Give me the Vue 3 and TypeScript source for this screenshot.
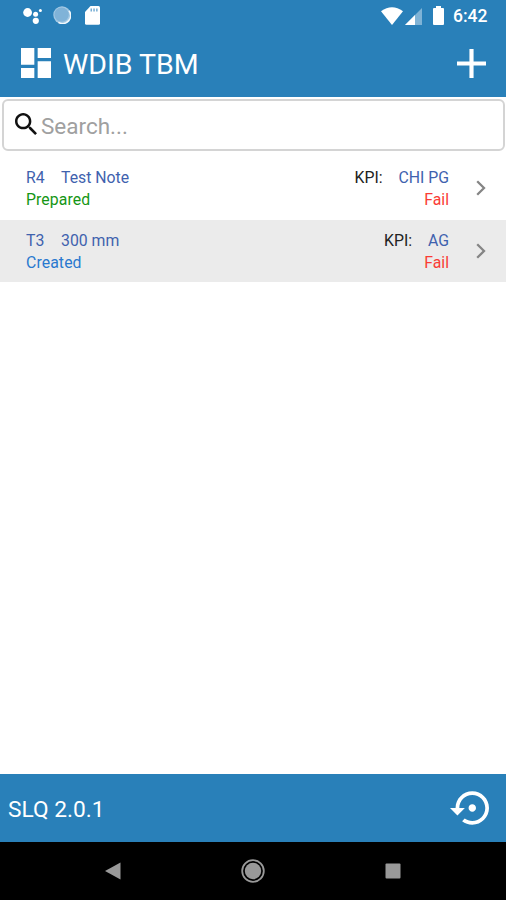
<script setup lang="ts">
interface Note {
  code: string
  name: string
  status: string
  tone: string
  kpi: string
  result: string
}

const notes: Note[] = [
  { code: 'R4', name: 'Test Note', status: 'Prepared', tone: 'prepared', kpi: 'CHI PG', result: 'Fail' },
  { code: 'T3', name: '300 mm', status: 'Created', tone: 'created', kpi: 'AG', result: 'Fail' },
]
</script>

<template>
  <div class="screen">
    <div class="status">
      <svg class="assistant" width="20" height="18" viewBox="0 0 20 18">
        <circle cx="4.600" cy="5.500" r="4.400" /><circle cx="12.600" cy="7.300" r="2.500" />
        <circle cx="12.800" cy="13.800" r="3.100" /><circle cx="17.400" cy="3.500" r="1.500" />
      </svg>
      <svg class="sync" width="18" height="18" viewBox="0 0 18 18">
        <circle cx="9" cy="9" r="8.700" fill="#a3c9e4" />
        <path d="M16 4.700A8 8 0 0 1 5.500 16.400" fill="none" stroke="#f2f8fc" stroke-width="1.600" />
        <circle cx="8.600" cy="8.600" r="7.200" fill="#80b3d8" />
      </svg>
      <svg class="card" width="15" height="19" viewBox="0 0 15 19">
        <path d="M5.500 0h8Q15 0 15 1.500v15.700q0 1.600-1.500 1.600h-12Q0 18.800 0 17.200V6z" />
        <path d="M5.500 2.500h1.500v3H5.500zM8.300 2.500h1.500v3H8.300zM11.100 2.500h1.500v3h-1.500z" fill="#75add4" />
      </svg>
      <span class="spacer"></span>
      <svg class="wifi" width="22" height="18" viewBox="0 0 22 18">
        <path d="M0 4.300Q11-3.800 22 4.300L11 18z" />
      </svg>
      <svg class="signal" width="17" height="17" viewBox="0 0 17 17">
        <path d="M17 0v17H0z" fill="#7fb3d6" /><path d="M10 7v10H0z" />
      </svg>
      <svg class="battery" width="11" height="19" viewBox="0 0 11 19">
        <path d="M3 0h5v2h2q1 0 1 1v15q0 1-1 1H1q-1 0-1-1V3q0-1 1-1h2z" />
      </svg>
      <span class="time">6:42</span>
    </div>
    <header class="header">
      <svg class="dashboard" viewBox="3 3 18 18">
        <path d="M3 13h8V3H3v10zm0 8h8v-6H3v6zm10 0h8V11h-8v10zm0-18v6h8V3h-8z" />
      </svg>
      <h1 class="title">WDIB TBM</h1>
      <svg class="plus" viewBox="5 5 14 14"><path d="M19 13h-6v6h-2v-6H5v-2h6V5h2v6h6z" /></svg>
    </header>
    <main class="content">
      <label class="search">
        <svg class="magnifier" viewBox="3 3 17.490 17.490">
          <path d="M15.500 14h-.79l-.28-.27C15.410 12.590 16 11.110 16 9.500 16 5.910 13.090 3 9.500 3S3 5.910 3 9.500 5.910 16 9.500 16c1.610 0 3.090-.59 4.230-1.570l.27.28v.79l5 4.990L20.490 19l-4.990-5zm-6 0C7.010 14 5 11.990 5 9.500S7.010 5 9.500 5 14 7.010 14 9.500 11.990 14 9.500 14z" />
        </svg>
        <input class="query" type="text" placeholder="Search..." />
      </label>
      <ul class="list">
        <li v-for="note in notes" :key="note.code" class="row">
          <div class="left">
            <div class="line"><span class="code">{{ note.code }}</span><span>{{ note.name }}</span></div>
            <div class="line status-line" :class="note.tone">{{ note.status }}</div>
          </div>
          <div class="right">
            <div class="line"><span class="kpi">KPI:</span><span>{{ note.kpi }}</span></div>
            <div class="line fail">{{ note.result }}</div>
          </div>
          <svg class="chevron" width="10" height="16" viewBox="0 0 10 16">
            <path d="M1.200 1.200L8 8l-6.800 6.800" fill="none" stroke="#858585" stroke-width="2.300" />
          </svg>
        </li>
      </ul>
    </main>
    <footer class="footer">
      <span class="version">SLQ 2.0.1</span>
      <svg class="restore" viewBox="0 3 21 18">
        <path d="M14 12c0-1.100-.9-2-2-2s-2 .9-2 2 .9 2 2 2 2-.9 2-2zm-2-9c-4.970 0-9 4.030-9 9H0l4 4 4-4H5c0-3.870 3.130-7 7-7s7 3.130 7 7-3.130 7-7 7c-1.510 0-2.910-.49-4.060-1.300l-1.420 1.440C8.040 20.300 9.940 21 12 21c4.970 0 9-4.030 9-9s-4.030-9-9-9z" />
      </svg>
    </footer>
    <nav class="nav">
      <svg width="16" height="18" viewBox="0 0 16 18"><path d="M0 9L15.500.5v17z" /></svg>
      <svg width="24" height="24" viewBox="0 0 24 24">
        <circle cx="12" cy="12" r="10.800" fill="none" stroke="#999" stroke-width="1.800" /><circle cx="12" cy="12" r="8.200" />
      </svg>
      <svg width="16" height="16" viewBox="0 0 16 16"><rect x=".5" y=".5" width="15" height="15" rx="1" /></svg>
    </nav>
  </div>
</template>

<style>
body {
  margin: 0;
}
</style>

<style scoped>
.screen {
  display: flex;
  flex-direction: column;
  width: 506px;
  height: 900px;
  overflow: hidden;
  background: #fff;
  font-family: Roboto, "Liberation Sans", sans-serif;
}
svg {
  display: block;
  flex: none;
  fill: #fff;
}
.status {
  display: flex;
  align-items: center;
  box-sizing: border-box;
  height: 31px;
  padding: 0 18px 0 23px;
  background: #2980b9;
}
.sync { margin: 0 0 1px 10px; }
.card { margin-left: 14px; }
.spacer { flex: 1; }
.wifi { margin-right: 2px; }
.signal { margin-top: 2px; }
.battery { margin-left: 11px; }
.time {
  width: 35px;
  margin: 1px 0 0 9px;
  color: #fff;
  font-size: 17.500px;
  font-weight: 500;
  line-height: 20px;
  white-space: nowrap;
}
.header {
  display: flex;
  align-items: center;
  box-sizing: border-box;
  height: 66px;
  padding: 0 20px 2px 21px;
  background: #2980b9;
}
.dashboard {
  width: 30px;
  height: 30px;
}
.title {
  flex: 1;
  margin: 3px 0 0 12px;
  color: #fff;
  font-size: 28.500px;
  font-weight: 400;
  line-height: 34px;
}
.plus {
  width: 29px;
  height: 29px;
}
.content {
  flex: 1;
  padding-top: 2px;
}
.search {
  display: flex;
  align-items: center;
  box-sizing: border-box;
  height: 52px;
  margin: 0 1px 0 2px;
  padding-left: 11px;
  border: 2px solid #d4d4d4;
  border-radius: 6px;
}
.magnifier {
  width: 22px;
  height: 22px;
  margin-bottom: 2px;
  fill: #111;
}
.query {
  flex: 1;
  min-width: 0;
  margin: 1px 0 0 4px;
  padding: 0;
  border: 0;
  outline: 0;
  background: transparent;
  color: #222;
  font: 22.500px/30px Roboto, "Liberation Sans", sans-serif;
}
.query::placeholder { color: #a0a0a0; }
.list {
  margin: 6px 0 0;
  padding: 0;
  list-style: none;
}
.row {
  display: flex;
  align-items: center;
  box-sizing: border-box;
  height: 62.500px;
  padding: 0 20px 0 26px;
  color: #3f62ae;
  font-size: 15.800px;
  line-height: 22px;
}
.row:nth-child(even) { background: #ebebeb; }
.left {
  flex: 1;
  padding-top: 2px;
}
.right {
  padding-top: 2px;
  text-align: right;
}
.code {
  display: inline-block;
  min-width: 19px;
  margin-right: 16px;
}
.kpi {
  margin-right: 16px;
  color: #222;
}
.status-line { letter-spacing: .1px; }
.prepared { color: #159615; }
.created { color: #2979cf; }
.fail { color: #fa3c35; }
.chevron { margin-left: 27px; }
.footer {
  display: flex;
  align-items: center;
  justify-content: space-between;
  box-sizing: border-box;
  height: 68px;
  padding: 0 17px 0 8px;
  background: #2980b9;
}
.version {
  padding-top: 3px;
  color: #fff;
  font-size: 22.700px;
  line-height: 30px;
}
.restore {
  width: 39px;
  height: 34px;
}
.nav {
  display: flex;
  align-items: center;
  justify-content: space-between;
  box-sizing: border-box;
  height: 58px;
  padding: 0 105px;
  background: #000;
}
.nav svg { fill: #999; }
</style>
